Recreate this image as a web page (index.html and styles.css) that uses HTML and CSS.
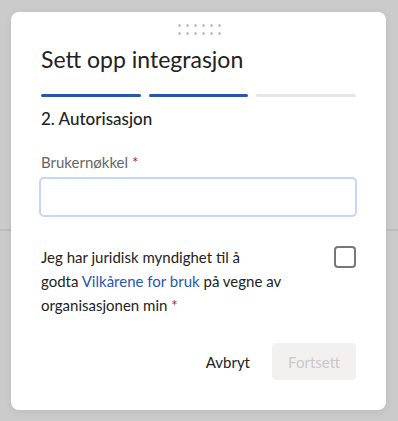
FILE: index.html
```html
<!DOCTYPE html>
<html lang="no">
<head>
  <meta charset="UTF-8" />
  <meta name="viewport" content="width=device-width, initial-scale=1.0" />
  <title>Sett opp integrasjon</title>
  <link rel="stylesheet" href="styles.css">
</head>
<body>
  <div class="dialog">
    <div class="handle">
      <span></span><span></span><span></span><span></span><span></span><span></span>
      <span></span><span></span><span></span><span></span><span></span><span></span>
    </div>
    <h1>Sett opp integrasjon</h1>
    <div class="steps">
      <div class="step done"></div>
      <div class="step done"></div>
      <div class="step"></div>
    </div>
    <h2>2. Autorisasjon</h2>
    <div class="form-group">
      <label for="userKey">Brukernøkkel <span class="req">*</span></label>
      <input type="text" id="userKey" />
    </div>
    <div class="consent">
      <p>Jeg har juridisk myndighet til å<br>godta <a href="#">Vilkårene for bruk</a> på vegne av organisasjonen min <span class="req">*</span></p>
      <span class="checkbox"></span>
    </div>
    <div class="actions">
      <button class="btn-text">Avbryt</button>
      <button class="btn-primary" disabled>Fortsett</button>
    </div>
  </div>
</body>
</html>
```
FILE: styles.css
```css
* {
  box-sizing: border-box;
  margin: 0;
  padding: 0;
}
body {
  font-family: Lato, "Noto Sans", sans-serif;
  color: #222;
  background: linear-gradient(#cbcbcb 229px, #bdbdbd 229px, #bdbdbd 231px, #cbcbcb 231px);
  background-color: #cbcbcb;
  min-height: 421px;
  padding: 12px 12px 11px 11px;
}
.dialog {
  background: #fff;
  border-radius: 8px;
  width: 375px;
  height: 398px;
  padding: 12px 30px 0 30px;
  box-shadow: 0 2px 8px rgba(0,0,0,0.08);
}
.handle {
  display: grid;
  grid-template-columns: repeat(6, 3px);
  gap: 5px 5px;
  justify-content: center;
  margin-left: 2px;
}
.handle span {
  width: 3px;
  height: 3px;
  border-radius: 50%;
  background: #c4c4c4;
}
h1 {
  font-size: 23px;
  font-weight: 400;
  margin-top: 10px;
  line-height: 28px;
}
.steps {
  display: flex;
  gap: 8px;
  margin-top: 21px;
}
.step {
  flex: 1;
  height: 3px;
  border-radius: 2px;
  background: #e6e6e6;
}
.step.done {
  background: #2a56b3;
}
h2 {
  font-size: 17px;
  font-weight: 500;
  margin-top: 10px;
  line-height: 24px;
}
.form-group {
  margin-top: 21px;
}
label {
  display: block;
  font-size: 15px;
  color: #666;
  line-height: 20px;
  margin-bottom: 5px;
}
.req {
  color: #a3233a;
}
input[type="text"] {
  display: block;
  width: 318px;
  margin-left: -2px;
  height: 40px;
  border: 2px solid #c3d7f7;
  border-radius: 5px;
  outline: none;
}
.consent {
  display: flex;
  justify-content: space-between;
  align-items: flex-start;
  margin-top: 28px;
}
.consent p {
  font-size: 15px;
  line-height: 24px;
  width: 260px;
}
.consent a {
  color: #2a56b3;
  text-decoration: none;
}
.checkbox {
  width: 22px;
  height: 22px;
  border: 2px solid #777;
  border-radius: 4px;
  margin-top: 1px;
}
.actions {
  display: flex;
  justify-content: flex-end;
  align-items: center;
  gap: 22px;
  margin-top: 26px;
}
.btn-text {
  background: none;
  border: none;
  font-family: inherit;
  font-size: 15px;
  color: #222;
}
.btn-primary {
  background: #f2f1f0;
  border: none;
  border-radius: 4px;
  width: 84px;
  height: 37px;
  font-family: inherit;
  font-size: 15px;
  color: #c8c8c8;
}
```
